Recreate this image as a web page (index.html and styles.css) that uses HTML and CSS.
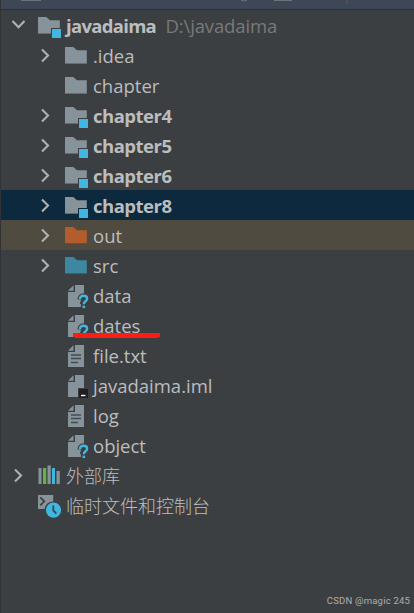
FILE: index.html
```html
<!DOCTYPE html>
<html lang="zh">
<head>
<meta charset="utf-8">
<title>Project</title>
<link rel="stylesheet" href="styles.css">
</head>
<body>
<svg class="defs" width="0" height="0">
  <defs>
    <symbol id="down" viewBox="0 0 36 30"><path d="M12.5 11l6 6.2 6-6.2" class="chev"/></symbol>
    <symbol id="right" viewBox="0 0 36 30"><path d="M15 9.5l6 6-6 6" class="chev"/></symbol>
    <symbol id="folder" viewBox="0 0 30 30"><path d="M2 7h8.3l3.7 3.2h9.8V24H2z" fill="currentColor"/><path d="M2 23.5h21.8" stroke="#000" stroke-opacity=".25" fill="none"/></symbol>
    <symbol id="module" viewBox="0 0 30 30"><path d="M2 7h8.3l3.7 3.2h9.8V18H15v6H2z" fill="#87939a"/><path d="M2 23.5h13" stroke="#626d73" fill="none"/><path d="M16 19h9v9h-9z" fill="#40b6e0"/></symbol>
    <symbol id="unknown" viewBox="0 0 30 30"><path d="M10.5 5.3v5.5H5zM12 5h9v8.6c-3.4-.3-6.4 1.5-6.4 5.9h3.2v1.6c-.6 1-.8 1.7-.8 2.9h.9v3H5V12h7z" fill="#87939a"/><path d="M16.9 19.2c0-2.3 1.4-3.5 3.7-3.5s3.5 1.2 3.5 3c0 2.6-3.3 2.5-3.3 5.5" fill="none" stroke="#40b6e0" stroke-width="2.4"/><path d="M19.5 25.6h2.6v2.5h-2.6z" fill="#40b6e0"/></symbol>
    <symbol id="text" viewBox="0 0 30 30"><path d="M10.5 5.3v5.5H5zM12 5h9v22H5V12h7z" fill="#87939a"/><path d="M8 15h10M8 18.5h10M8 22.5h7" stroke="#454c50" stroke-width="1.6"/></symbol>
    <symbol id="iml" viewBox="0 0 30 30"><path d="M10.5 5.3v5.5H5zM12 5h9v13h-6v9H5V12h7z" fill="#87939a"/><path d="M16 19h9v9h-9z" fill="#231f20"/><path d="M18 25.5h4.5" stroke="#fff" stroke-width="1.4"/></symbol>
    <symbol id="library" viewBox="0 0 30 30"><path d="M2.5 8h3v16h-3zM11.5 5.5h3.3V24h-3.3zM20.5 11h3.3v13h-3.3z" fill="#87939a"/><path d="M7 8h3.2v16H7z" fill="#62b543"/><path d="M16 8h3v16h-3z" fill="#40b6e0"/></symbol>
    <symbol id="scratch" viewBox="0 0 30 30"><path d="M2 5h15.2v6.6c-4.5 0-8 3-8.5 7.4H2z" fill="#87939a"/><path d="M4.3 7.3l4 4-4 4" fill="none" stroke="#3c3f41" stroke-width="1.7"/><circle cx="17.5" cy="20.2" r="7.6" fill="#40b6e0"/><path d="M17.3 15.5v5l3 3" fill="none" stroke="#334b57" stroke-width="1.8"/></symbol>
  </defs>
</svg>
<div class="window">
  <header class="bar">
    <svg width="414" height="9"><path d="M20 0h20M273 0h18" stroke="#87939a" stroke-width="2" opacity=".6"/><path d="M240 0q3 2 6 0" stroke="#87939a" fill="none" opacity=".6"/><path d="M346 0v4" stroke="#665b5c"/></svg>
  </header>
  <main class="tree">
    <div class="row"><svg class="arrow"><use href="#down"/></svg><svg class="icon"><use href="#module"/></svg><span class="name strong project">javadaima</span><span class="path">D:\javadaima</span></div>
    <div class="row child"><svg class="arrow"><use href="#right"/></svg><svg class="icon"><use href="#folder"/></svg><span class="name">.idea</span></div>
    <div class="row child"><svg class="arrow"></svg><svg class="icon"><use href="#folder"/></svg><span class="name">chapter</span></div>
    <div class="row child"><svg class="arrow"><use href="#right"/></svg><svg class="icon"><use href="#module"/></svg><span class="name strong">chapter4</span></div>
    <div class="row child"><svg class="arrow"><use href="#right"/></svg><svg class="icon"><use href="#module"/></svg><span class="name strong">chapter5</span></div>
    <div class="row child"><svg class="arrow"><use href="#right"/></svg><svg class="icon"><use href="#module"/></svg><span class="name strong">chapter6</span></div>
    <div class="row child selected"><svg class="arrow"><use href="#right"/></svg><svg class="icon"><use href="#module"/></svg><span class="name strong">chapter8</span></div>
    <div class="row child excluded"><svg class="arrow"><use href="#right"/></svg><svg class="icon orange"><use href="#folder"/></svg><span class="name">out</span></div>
    <div class="row child"><svg class="arrow"><use href="#right"/></svg><svg class="icon teal"><use href="#folder"/></svg><span class="name">src</span></div>
    <div class="row child"><svg class="arrow"></svg><svg class="icon"><use href="#unknown"/></svg><span class="name">data</span></div>
    <div class="row child marked"><svg class="arrow"></svg><svg class="icon"><use href="#unknown"/></svg><span class="name">dates</span><svg class="underline" width="90" height="8"><path d="M0 0h87v4H0z" fill="#fd1d12"/><path d="M2 4.2h83" stroke="#fd1d12" stroke-width="1.6"/></svg></div>
    <div class="row child"><svg class="arrow"></svg><svg class="icon"><use href="#text"/></svg><span class="name">file.txt</span></div>
    <div class="row child"><svg class="arrow"></svg><svg class="icon"><use href="#iml"/></svg><span class="name">javadaima.iml</span></div>
    <div class="row child"><svg class="arrow"></svg><svg class="icon"><use href="#text"/></svg><span class="name">log</span></div>
    <div class="row child"><svg class="arrow"></svg><svg class="icon"><use href="#unknown"/></svg><span class="name">object</span></div>
    <div class="row"><svg class="arrow"><use href="#right"/></svg><svg class="icon"><use href="#library"/></svg><span class="name cjk">外部库</span></div>
    <div class="row"><svg class="arrow"></svg><svg class="icon"><use href="#scratch"/></svg><span class="name cjk">临时文件和控制台</span></div>
  </main>
  <footer class="credit">CSDN @magic 245</footer>
</div>
</body>
</html>
```
FILE: styles.css
```css
body {
  margin: 0;
  background: #3c3f41;
  font-family: "Open Sans", "Noto Sans CJK SC", sans-serif;
}
.defs {
  position: absolute;
}
.window {
  box-sizing: border-box;
  width: 414px;
  height: 613px;
  display: flex;
  flex-direction: column;
  overflow: hidden;
  box-shadow: inset 1px 0 #313335;
}
.bar {
  height: 9px;
  margin-left: 1px;
  background: #3d4756;
  border-bottom: 1px solid #2f3133;
}
.bar svg {
  display: block;
}
.tree {
  flex: 1;
}
.row {
  display: flex;
  align-items: center;
  height: 30px;
  color: #bbbdbf;
  white-space: nowrap;
}
.child {
  padding-left: 27px;
}
.selected {
  background: #0d293e;
  box-shadow: inset 1px 0 #313335;
}
.excluded {
  background: #4f4b41;
  box-shadow: inset 1px 0 #313335;
}
.marked {
  position: relative;
}
.underline {
  position: absolute;
  left: 73px;
  top: 23px;
}
.arrow {
  width: 36px;
  height: 30px;
  flex: none;
}
.chev {
  fill: none;
  stroke: #afb1b3;
  stroke-width: 2.1;
}
.icon {
  width: 30px;
  height: 30px;
  flex: none;
  color: #87939a;
}
.orange {
  color: #b35c2e;
}
.teal {
  color: #3d87a1;
}
.name,
.path {
  font-size: 18.5px;
  line-height: 30px;
  padding-top: 1px;
}
.strong {
  font-weight: 700;
  letter-spacing: -0.5px;
}
.project {
  letter-spacing: -0.7px;
}
.path {
  color: #777a7c;
  margin-left: 9.5px;
  letter-spacing: -0.15px;
}
.cjk {
  font-family: "Noto Sans CJK SC", sans-serif;
  font-size: 18px;
  font-weight: 300;
  padding-top: 0;
}
.credit {
  height: 25px;
  padding-right: 4px;
  text-align: right;
  font: 9.5px/25px Roboto, sans-serif;
  letter-spacing: 0.2px;
  color: #adafb0;
}
```
